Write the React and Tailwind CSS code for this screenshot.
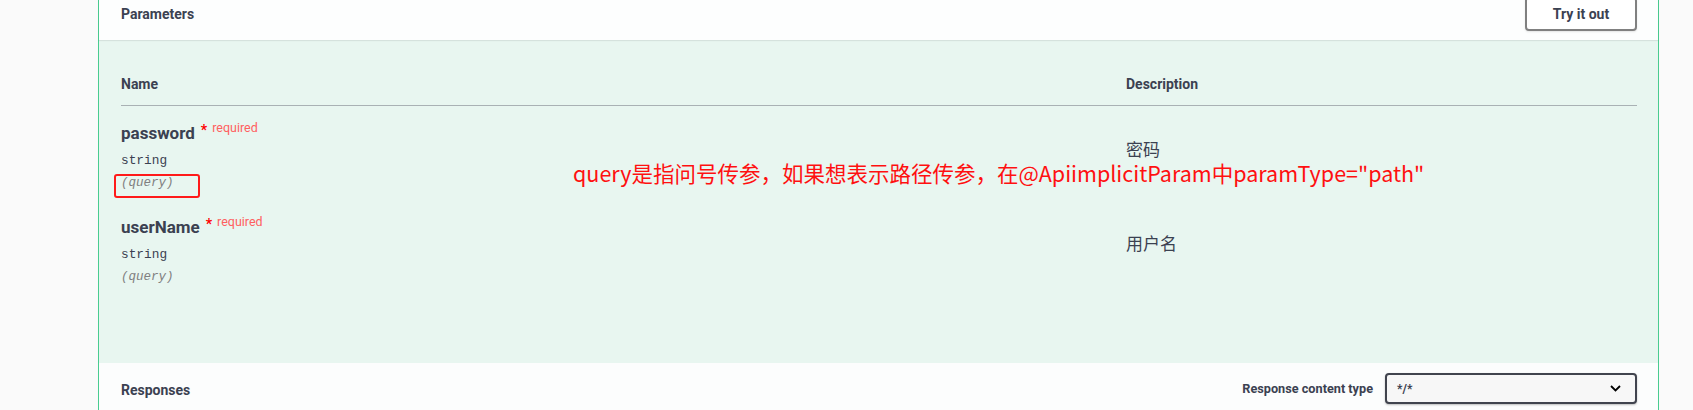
import React from 'react';

const UI = { fontFamily: 'Roboto, "Noto Sans CJK SC", sans-serif' };
const MONO = { fontFamily: '"Liberation Mono", "DejaVu Sans Mono", monospace' };
const CJK = { fontFamily: '"Noto Sans CJK SC", Roboto, sans-serif' };

const PARAMS = [
  { name: 'password', type: 'string', place: '(query)', desc: '密码', marked: true },
  { name: 'userName', type: 'string', place: '(query)', desc: '用户名' },
];

function ParamRow({ p }) {
  return (
    <div className="flex">
      <div className="w-[1005px] shrink-0">
        <div className="flex items-start h-[20px]">
          <span className="text-[17px] leading-[20px] font-bold text-[#3b4151]">{p.name}</span>
          <span className="ml-[6px] text-[14px] leading-[14px] font-bold text-[#ff0000]">*</span>
          <span className="ml-[5px] -mt-[2px] text-[12.5px] leading-[14px] text-[#ff6060]">required</span>
        </div>
        <div className="mt-[10px] text-[12.8px] leading-[16px] text-[#3b4151]" style={MONO}>{p.type}</div>
        <div className="mt-[6px] relative inline-block text-[12.5px] leading-[16px] italic text-[#808080]" style={MONO}>
          {p.place}
          {p.marked && (
            <span className="absolute -left-[7px] -top-[1px] w-[86px] h-[24px] border-2 border-[#ff1a1a] rounded-[3px]" />
          )}
        </div>
      </div>
      <div className="pt-[14px] text-[17px] leading-[24px] text-[#3b4151]" style={CJK}>{p.desc}</div>
    </div>
  );
}

export default function App() {
  return (
    <div className="w-[1693px] h-[410px] overflow-hidden bg-[#fafafa] flex" style={UI}>
      <div className="ml-[98px] w-[1561px] shrink-0 border-x border-[#49cc90] bg-[#e8f6f0] flex flex-col">
        {/* Parameters header */}
        <div className="-mt-[12px] h-[52px] shrink-0 bg-[#fdfefe] shadow-[0_1px_1px_rgba(0,0,0,0.08)] pl-[22px] pr-[21px] flex items-center justify-between">
          <div className="text-[14px] font-bold text-[#3b4151]">Parameters</div>
          <button className="w-[112px] h-[34px] border-2 border-[#808080] rounded-[4px] bg-white shadow-[0_1px_2px_rgba(0,0,0,0.1)] text-[14px] font-bold text-[#3b4151]">
            Try it out
          </button>
        </div>

        {/* Parameters table */}
        <div className="relative h-[323px] shrink-0 pl-[22px] pr-[21px] pt-[34px]">
          <div className="flex border-b border-[#a9b1b4] pb-[11px]">
            <div className="w-[1005px] shrink-0 text-[14px] leading-[20px] font-bold text-[#3b4151]">Name</div>
            <div className="text-[14px] leading-[20px] font-bold text-[#3b4151]">Description</div>
          </div>
          <div className="pt-[17px] flex flex-col gap-[24px]">
            {PARAMS.map(p => <ParamRow key={p.name} p={p} />)}
          </div>

          {/* annotation */}
          <div className="absolute left-[474px] top-[118px] text-[21.5px] leading-[30px] text-[#ff1010] whitespace-nowrap" style={CJK}>
            query是指问号传参，如果想表示路径传参，在@ApiimplicitParam中paramType="path"
          </div>
        </div>

        {/* Responses header */}
        <div className="flex-1 bg-[#fcfdfd] pl-[22px] pr-[21px] pt-[10px] flex items-start justify-between">
          <div className="mt-[7px] text-[14px] leading-[20px] font-bold text-[#3b4151]">Responses</div>
          <div className="flex items-center">
            <span className="text-[12.7px] font-bold text-[#3b4151] mr-[12px]">Response content type</span>
            <div className="w-[252px] h-[31px] border-2 border-[#41444e] rounded-[4px] bg-[#f7f7f7] shadow-[0_1px_2px_rgba(0,0,0,0.25)] flex items-center justify-between pl-[10px] pr-[14px]">
              <span className="text-[12px] font-bold text-[#3b4151]">*/*</span>
              <svg width="11" height="7" viewBox="0 0 11 7">
                <polyline points="1,1 5.5,5.5 10,1" fill="none" stroke="#000" strokeWidth="1.8" />
              </svg>
            </div>
          </div>
        </div>
      </div>
    </div>
  );
}
